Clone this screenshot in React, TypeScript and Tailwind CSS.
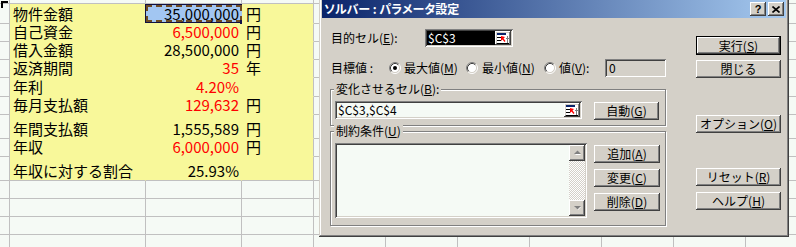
import React from "react";

const ROWH = [
  "h-[4px]",
  "h-[20px]",
  "h-[18px]",
  "h-[18px]",
  "h-[18px]",
  "h-[19px]",
  "h-[18px]",
  "h-[24px]",
  "h-[18px]",
  "h-[24px]",
  "h-[18px]",
  "h-[18px]",
  "h-[18px]",
  "h-[18px]",
];
const COLW = [
  "w-[10px]",
  "w-[136px]",
  "w-[96px]",
  "w-[72px]",
  "w-[72px]",
  "w-[72px]",
  "w-[72px]",
  "w-[72px]",
  "w-[72px]",
  "w-[72px]",
  "w-[72px]",
];

type RowData = { label: string; value: string; unit: string; red: boolean };
const DATA: RowData[] = [
  { label: "物件金額", value: "35,000,000", unit: "円", red: false },
  { label: "自己資金", value: "6,500,000", unit: "円", red: true },
  { label: "借入金額", value: "28,500,000", unit: "円", red: false },
  { label: "返済期間", value: "35", unit: "年", red: true },
  { label: "年利", value: "4.20%", unit: "", red: true },
  { label: "毎月支払額", value: "129,632", unit: "円", red: true },
  { label: "年間支払額", value: "1,555,589", unit: "円", red: false },
  { label: "年収", value: "6,000,000", unit: "円", red: true },
  { label: "年収に対する割合", value: "25.93%", unit: "", red: false },
];

const RAISED =
  "shadow-[inset_-1px_-1px_#404040,inset_1px_1px_#ffffff,inset_-2px_-2px_#808080,inset_2px_2px_#d4d0c8]";
const SUNKEN =
  "shadow-[inset_1px_1px_#808080,inset_-1px_-1px_#ffffff,inset_2px_2px_#404040,inset_-2px_-2px_#d4d0c8]";

function SheetCell({ r, c }: { r: number; c: number }) {
  const yellow = r >= 1 && r <= 9 && c >= 1 && c <= 3;
  const rightYellow = yellow && c < 3;
  const bottomYellow = yellow && r < 9;
  const d = yellow ? DATA[r - 1] : null;
  const selected = r === 1 && c === 2;
  return (
    <div
      className={`relative flex-none box-border border-r border-b flex items-end pb-[1px] ${COLW[c]} ${
        yellow ? "bg-[#f8f89a]" : ""
      } ${rightYellow ? "border-r-[#f8f89a]" : "border-r-[#c0c0c0]"} ${
        bottomYellow ? "border-b-[#f8f89a]" : "border-b-[#c0c0c0]"
      }`}
    >
      {selected && (
        <div className="absolute left-[-1px] top-0 right-[-2px] bottom-0 bg-[#a2c6f2] border border-[#101040]">
          <div className="w-full h-full border-2 border-dashed border-[#6e4a22]" />
          <div className="absolute right-[-3px] bottom-[-3px] w-[5px] h-[5px] bg-[#10104a]" />
        </div>
      )}
      {d && c === 1 && <span className="pl-[3px] leading-[16px] whitespace-nowrap">{d.label}</span>}
      {d && c === 2 && (
        <span
          className={`relative w-full text-right pr-[2px] leading-[16px] ${
            d.red ? "text-[#ff0000]" : "text-black"
          }`}
        >
          {d.value}
        </span>
      )}
      {d && c === 3 && <span className="pl-[4px] leading-[16px]">{d.unit}</span>}
    </div>
  );
}

function Sheet() {
  return (
    <div className="flex flex-col text-[15px] text-black">
      {ROWH.map((h, r) => (
        <div key={r} className={`flex flex-none ${h}`}>
          {COLW.map((_, c) => (
            <SheetCell key={c} r={r} c={c} />
          ))}
        </div>
      ))}
    </div>
  );
}

function Btn({
  children,
  className,
  def,
}: {
  children: React.ReactNode;
  className: string;
  def?: boolean;
}) {
  return (
    <div
      className={`flex-none box-border flex items-center justify-center bg-[#d4d0c8] text-[12px] leading-[14px] ${
        def ? "border border-black" : ""
      } ${className}`}
    >
      <div className={`w-full h-full flex items-center justify-center ${RAISED}`}>{children}</div>
    </div>
  );
}

function RefIcon() {
  return (
    <svg width="12" height="11" viewBox="0 0 12 11">
      <rect x="0" y="0" width="12" height="11" fill="#ffffff" />
      <rect x="0" y="0" width="9" height="2" fill="#0a246a" />
      <rect x="0" y="4" width="4" height="1" fill="#000000" />
      <rect x="0" y="7" width="4" height="1" fill="#000000" />
      <rect x="0" y="10" width="12" height="1" fill="#000000" />
      <rect x="10" y="3" width="1" height="7" fill="#808080" />
      <rect x="9" y="5" width="3" height="1" fill="#808080" />
      <path d="M4 3 L4 8 L5.5 6.5 L7.5 9 L8.5 8 L6.5 5.5 L8 4 Z" fill="#ff0000" />
    </svg>
  );
}

function RefButton() {
  return (
    <div className={`flex-none w-[16px] h-full bg-[#d4d0c8] flex items-center justify-center ${RAISED}`}>
      <RefIcon />
    </div>
  );
}

function Radio({ checked }: { checked?: boolean }) {
  return (
    <svg width="12" height="12" viewBox="0 0 12 12" className="flex-none">
      <circle cx="6" cy="6" r="4.5" fill="#ffffff" />
      <path d="M9.89 2.11 A5.5 5.5 0 0 0 2.11 9.89" fill="none" stroke="#808080" strokeWidth="1" />
      <path d="M9.89 2.11 A5.5 5.5 0 0 1 2.11 9.89" fill="none" stroke="#ffffff" strokeWidth="1" />
      <path d="M9.18 2.82 A4.5 4.5 0 0 0 2.82 9.18" fill="none" stroke="#404040" strokeWidth="1" />
      <path d="M9.18 2.82 A4.5 4.5 0 0 1 2.82 9.18" fill="none" stroke="#d4d0c8" strokeWidth="1" />
      {checked && <circle cx="6" cy="6" r="2" fill="#000000" />}
    </svg>
  );
}

function Arrow({ up }: { up?: boolean }) {
  return (
    <svg width="9" height="6" viewBox="0 0 9 6">
      {up ? (
        <>
          <path d="M2 5 L5 2 L8 5 Z" fill="#ffffff" />
          <path d="M1 4 L4.5 0.5 L8 4 Z" fill="#808080" />
        </>
      ) : (
        <>
          <path d="M2 2 L5 5 L8 2 Z" fill="#ffffff" />
          <path d="M1 1 L4.5 4.5 L8 1 Z" fill="#808080" />
        </>
      )}
    </svg>
  );
}

function TitleBar() {
  return (
    <div className="flex-none h-[18px] flex items-center bg-[linear-gradient(to_right,#0a246a,#a6caf0)] pl-[2px] pr-[2px]">
      <span className="text-white text-[12px] font-bold leading-[14px] [font-feature-settings:'palt'] whitespace-nowrap">
        ソルバー : パラメータ設定
      </span>
      <div className="ml-auto flex gap-[2px]">
        <div className={`w-[16px] h-[14px] bg-[#d4d0c8] flex items-center justify-center ${RAISED}`}>
          <span className="text-[11px] font-bold leading-[11px] font-['Liberation_Sans',sans-serif]">?</span>
        </div>
        <div className={`w-[16px] h-[14px] bg-[#d4d0c8] flex items-center justify-center ${RAISED}`}>
          <svg width="8" height="7" viewBox="0 0 8 7">
            <path d="M0.5 0.5 L7.5 6.5 M7.5 0.5 L0.5 6.5" stroke="#000" strokeWidth="1.6" />
          </svg>
        </div>
      </div>
    </div>
  );
}

function Dialog() {
  return (
    <div
      className={`absolute left-[319px] top-[-3px] w-[470px] h-[240px] bg-[#d4d0c8] p-[3px] flex flex-col text-[12px] leading-[14px] text-black shadow-[inset_-1px_-1px_#404040,inset_1px_1px_#d4d0c8,inset_-2px_-2px_#808080,inset_2px_2px_#ffffff]`}
    >
      <TitleBar />
      <div className="flex">
        {/* left column */}
        <div className="ml-[8px] w-[336px] flex flex-col">
          {/* target cell */}
          <div className="mt-[11px] h-[18px] flex items-center">
            <span className="w-[95px] pl-[1px] whitespace-nowrap">
              目的セル(<u>E</u>):
            </span>
            <div className={`w-[88px] h-full flex p-[2px] bg-black ${SUNKEN}`}>
              <div className="flex-1 bg-black text-white pl-[1px] flex items-center">$C$3</div>
              <RefButton />
            </div>
          </div>
          {/* goal */}
          <div className="mt-[12px] h-[18px] flex items-center">
            <span className="w-[59px] pl-[1px] whitespace-nowrap">目標値 :</span>
            <div className="w-[77px] flex items-center gap-[3px]">
              <Radio checked />
              <span className="whitespace-nowrap">
                最大値(<u>M</u>)
              </span>
            </div>
            <div className="w-[78px] flex items-center gap-[4px]">
              <Radio />
              <span className="whitespace-nowrap">
                最小値(<u>N</u>)
              </span>
            </div>
            <div className="w-[61px] flex items-center gap-[3px]">
              <Radio />
              <span className="whitespace-nowrap">
                値(<u>V</u>):
              </span>
            </div>
            <div className={`w-[61px] h-full flex items-center pl-[4px] bg-[#d4d0c8] ${SUNKEN}`}>0</div>
          </div>
          {/* changing cells frame */}
          <div className="relative mt-[12px] h-[37px] box-border border border-[#808080] shadow-[inset_1px_1px_#ffffff,1px_1px_#ffffff] pl-[4px] pt-[11px] flex items-start">
            <span className="absolute left-[3px] top-[-8px] px-[2px] bg-[#d4d0c8] whitespace-nowrap">
              変化させるセル(<u>B</u>):
            </span>
            <div className={`w-[247px] h-[18px] flex p-[2px] bg-[#f5faf5] ${SUNKEN}`}>
              <div className="flex-1 pl-[1px] flex items-center">$C$3,$C$4</div>
              <RefButton />
            </div>
            <Btn className="ml-[12px] mt-[1px] w-[65px] h-[18px]">
              自動(<u>G</u>)
            </Btn>
          </div>
          {/* constraints frame */}
          <div className="relative mt-[5px] h-[95px] box-border border border-[#808080] shadow-[inset_1px_1px_#ffffff,1px_1px_#ffffff] pl-[4px] pt-[11px] flex items-start">
            <span className="absolute left-[3px] top-[-8px] px-[2px] bg-[#d4d0c8] whitespace-nowrap">
              制約条件(<u>U</u>)
            </span>
            <div className={`w-[252px] h-[75px] flex p-[2px] bg-[#f5faf5] ${SUNKEN}`}>
              <div className="flex-1" />
              <div className="w-[16px] h-full flex flex-col bg-[repeating-conic-gradient(#d4d0c8_0_25%,#ffffff_0_50%)] bg-[length:2px_2px]">
                <div className={`w-[16px] h-[16px] bg-[#d4d0c8] flex items-center justify-center ${RAISED}`}>
                  <Arrow up />
                </div>
                <div className="flex-1" />
                <div className={`w-[16px] h-[16px] bg-[#d4d0c8] flex items-center justify-center ${RAISED}`}>
                  <Arrow />
                </div>
              </div>
            </div>
            <div className="ml-[7px] mt-[2px] flex flex-col gap-[6px]">
              <Btn className="w-[66px] h-[18px]">
                追加(<u>A</u>)
              </Btn>
              <Btn className="w-[66px] h-[18px]">
                変更(<u>C</u>)
              </Btn>
              <Btn className="w-[66px] h-[18px]">
                削除(<u>D</u>)
              </Btn>
            </div>
          </div>
        </div>
        {/* right column */}
        <div className="ml-[30px] w-[85px] flex flex-col">
          <Btn def className="mt-[18px] w-[85px] h-[19px]">
            実行(<u>S</u>)
          </Btn>
          <Btn className="mt-[5px] w-[85px] h-[18px]">閉じる</Btn>
          <Btn className="mt-[37px] w-[85px] h-[18px]">
            オプション(<u>O</u>)
          </Btn>
          <Btn className="mt-[35px] w-[85px] h-[18px]">
            リセット(<u>R</u>)
          </Btn>
          <Btn className="mt-[6px] w-[85px] h-[18px]">
            ヘルプ(<u>H</u>)
          </Btn>
        </div>
      </div>
    </div>
  );
}

export default function App() {
  return (
    <div className="relative w-[796px] h-[247px] overflow-hidden bg-[#f5faf5] font-['Noto_Sans_CJK_JP','Noto_Sans',sans-serif]">
      <Sheet />
      <svg width="9" height="9" viewBox="0 0 9 9" className="absolute left-0 top-0">
        <path d="M1 1 H8 V3 H3 V8 H1 Z" fill="#000" />
      </svg>
      <Dialog />
    </div>
  );
}
